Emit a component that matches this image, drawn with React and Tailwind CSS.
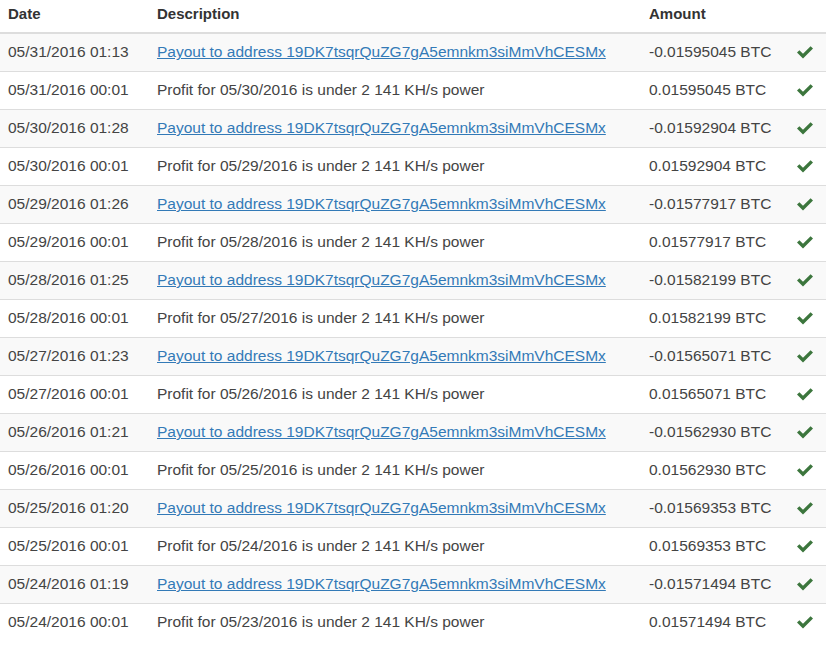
const rows = [
  ["05/31/2016 01:13", "payout", "-0.01595045 BTC"],
  ["05/31/2016 00:01", "05/30/2016", "0.01595045 BTC"],
  ["05/30/2016 01:28", "payout", "-0.01592904 BTC"],
  ["05/30/2016 00:01", "05/29/2016", "0.01592904 BTC"],
  ["05/29/2016 01:26", "payout", "-0.01577917 BTC"],
  ["05/29/2016 00:01", "05/28/2016", "0.01577917 BTC"],
  ["05/28/2016 01:25", "payout", "-0.01582199 BTC"],
  ["05/28/2016 00:01", "05/27/2016", "0.01582199 BTC"],
  ["05/27/2016 01:23", "payout", "-0.01565071 BTC"],
  ["05/27/2016 00:01", "05/26/2016", "0.01565071 BTC"],
  ["05/26/2016 01:21", "payout", "-0.01562930 BTC"],
  ["05/26/2016 00:01", "05/25/2016", "0.01562930 BTC"],
  ["05/25/2016 01:20", "payout", "-0.01569353 BTC"],
  ["05/25/2016 00:01", "05/24/2016", "0.01569353 BTC"],
  ["05/24/2016 01:19", "payout", "-0.01571494 BTC"],
  ["05/24/2016 00:01", "05/23/2016", "0.01571494 BTC"],
];

function OkIcon() {
  return (
    <svg width="16" height="13" viewBox="0 0 16 13" className="inline-block">
      <path d="M0 6.6 L2.4 4.2 L6 7.7 L13.6 0.2 L16 2.6 L6 12.4 Z" fill="#3c763d" />
    </svg>
  );
}

export default function App() {
  return (
    <div className="w-[826px] bg-white text-[15.5px] leading-[20px] text-[#444] font-['Liberation_Sans',Arial,sans-serif]">
      <table className="w-full table-fixed border-collapse">
        <colgroup>
          <col className="w-[149px]" />
          <col className="w-[492px]" />
          <col className="w-[148px]" />
          <col className="w-[37px]" />
        </colgroup>
        <thead>
          <tr className="h-[33px] border-b-2 border-[#ddd] text-[15px] text-[#333]">
            <th className="text-left font-bold pl-2 pt-1 pb-2">Date</th>
            <th className="text-left font-bold pl-2 pt-1 pb-2">Description</th>
            <th className="text-left font-bold pl-2 pt-1 pb-2">Amount</th>
            <th className="pt-1 pb-2"></th>
          </tr>
        </thead>
        <tbody>
          {rows.map((r, i) => (
            <tr
              key={i}
              className={`h-[38px] ${i > 0 ? "border-t border-[#ddd]" : ""} ${i % 2 === 0 ? "bg-[#f9f9f9]" : "bg-white"}`}
            >
              <td className="pl-2 align-middle">{r[0]}</td>
              <td className="pl-2 align-middle">
                {r[1] === "payout" ? (
                  <a href="#" className="text-[#337ab7] underline">
                    Payout to address 19DK7tsqrQuZG7gA5emnkm3siMmVhCESMx
                  </a>
                ) : (
                  <span>Profit for {r[1]} is under 2 141 KH/s power</span>
                )}
              </td>
              <td className="pl-2 align-middle">{r[2]}</td>
              <td className="pl-2 align-middle">
                <div className="flex items-center">
                  <OkIcon />
                </div>
              </td>
            </tr>
          ))}
        </tbody>
      </table>
    </div>
  );
}
